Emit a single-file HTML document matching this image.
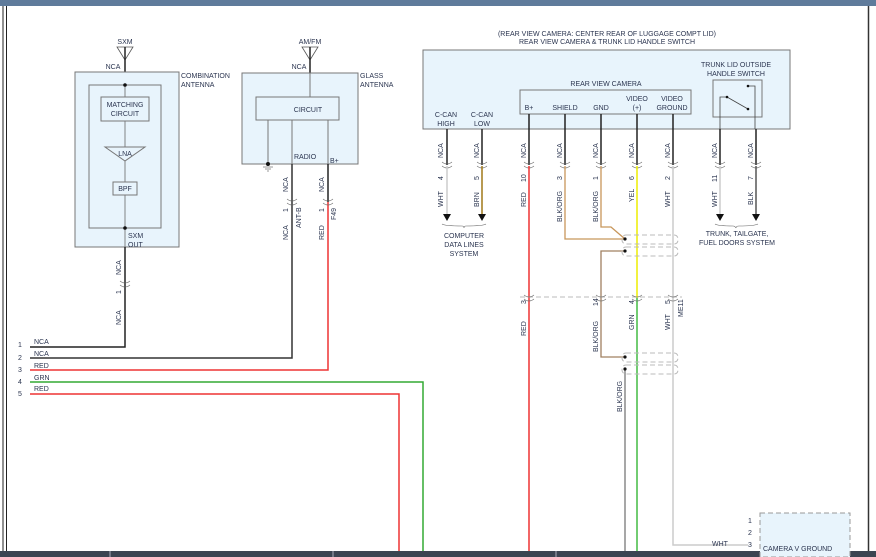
<!DOCTYPE html>
<html><head><meta charset="utf-8"><style>
html,body{margin:0;padding:0;background:#fff;}
svg{display:block;font-family:"Liberation Sans",Arial,sans-serif;}
text{fill:#2b3550;font-size:7px;}
</style></head><body>
<svg width="876" height="557" viewBox="0 0 876 557" xmlns="http://www.w3.org/2000/svg">
<rect x="0" y="0" width="876" height="6" fill="#5f7b9b"/>
<line x1="3" y1="6" x2="3" y2="551" stroke="#222" stroke-width="1"/>
<line x1="6.5" y1="6" x2="6.5" y2="551" stroke="#222" stroke-width="1"/>
<line x1="868.5" y1="6" x2="868.5" y2="551" stroke="#333" stroke-width="1.5"/>
<rect x="0" y="551" width="876" height="6" fill="#3b4552"/>
<line x1="110" y1="551" x2="110" y2="557" stroke="#aab" />
<line x1="333" y1="551" x2="333" y2="557" stroke="#aab" />
<line x1="556" y1="551" x2="556" y2="557" stroke="#aab" />

<!-- Combination antenna -->
<text x="125" y="44" text-anchor="middle">SXM</text>
<path d="M117 47 L133 47 L125 60 Z" fill="none" stroke="#555" stroke-width="0.8"/>
<line x1="125" y1="47" x2="125" y2="72" stroke="#222" stroke-width="1.5"/>
<text x="113" y="69" text-anchor="middle">NCA</text>
<rect x="75" y="72" width="104" height="175" fill="#e8f4fc" stroke="#777"/>
<text x="181" y="78">COMBINATION</text><text x="181" y="87">ANTENNA</text>
<rect x="89" y="85" width="72" height="143" fill="none" stroke="#777"/>
<line x1="125" y1="85" x2="125" y2="247" stroke="#666" stroke-width="0.8"/>
<rect x="101" y="97" width="48" height="24" fill="#e8f4fc" stroke="#777"/>
<text x="125" y="107" text-anchor="middle">MATCHING</text><text x="125" y="116" text-anchor="middle">CIRCUIT</text>
<path d="M105 147 L145 147 L125 161 Z" fill="#e8f4fc" stroke="#777"/>
<text x="125" y="156" text-anchor="middle">LNA</text>
<rect x="113" y="182" width="24" height="13" fill="#e8f4fc" stroke="#777"/>
<text x="125" y="191" text-anchor="middle">BPF</text>
<circle cx="125" cy="85" r="1.8" fill="#111"/><circle cx="125" cy="228" r="1.8" fill="#111"/>
<text x="128" y="238">SXM</text><text x="128" y="247">OUT</text>
<path d="M125 247 V347 H30" fill="none" stroke="#222" stroke-width="1.5"/>
<text transform="translate(121,275) rotate(-90)">NCA</text>
<text transform="translate(121,294) rotate(-90)">1</text>
<text transform="translate(121,325) rotate(-90)">NCA</text>
<path d="M120 281 q5 4 10 0 M120 285 q5 4 10 0" fill="none" stroke="#666" stroke-width="0.6"/>

<!-- Glass antenna -->
<text x="310" y="44" text-anchor="middle">AM/FM</text>
<path d="M302 47 L318 47 L310 60 Z" fill="none" stroke="#555" stroke-width="0.8"/>
<line x1="310" y1="47" x2="310" y2="73" stroke="#222" stroke-width="1.5"/>
<text x="299" y="69" text-anchor="middle">NCA</text>
<rect x="242" y="73" width="116" height="91" fill="#e8f4fc" stroke="#777"/>
<text x="360" y="78">GLASS</text><text x="360" y="87">ANTENNA</text>
<line x1="310" y1="73" x2="310" y2="97" stroke="#777"/>
<rect x="256" y="97" width="83" height="23" fill="#e8f4fc" stroke="#777"/>
<text x="308" y="112" text-anchor="middle">CIRCUIT</text>
<line x1="268" y1="120" x2="268" y2="164" stroke="#777"/>
<line x1="292" y1="120" x2="292" y2="164" stroke="#777"/>
<line x1="328" y1="120" x2="328" y2="164" stroke="#777"/>
<circle cx="268" cy="164" r="2" fill="#111"/>
<path d="M263 167 H273 M265 169 H271 M267 171 H269" stroke="#333" stroke-width="0.6"/>
<text x="294" y="159">RADIO</text><text x="330" y="163">B+</text>
<path d="M292 164 V358 H30" fill="none" stroke="#333" stroke-width="1.5"/>
<line x1="328" y1="164" x2="328" y2="202" stroke="#222" stroke-width="1.5"/>
<path d="M328 202 V370 H30" fill="none" stroke="#e33" stroke-width="1.5"/>
<text transform="translate(288,192) rotate(-90)">NCA</text>
<text transform="translate(324,192) rotate(-90)">NCA</text>
<text transform="translate(288,212) rotate(-90)">1</text>
<text transform="translate(324,212) rotate(-90)">1</text>
<text transform="translate(288,240) rotate(-90)">NCA</text>
<text transform="translate(324,240) rotate(-90)">RED</text>
<text transform="translate(301,228) rotate(-90)">ANT-B</text>
<text transform="translate(336,220) rotate(-90)">F49</text>
<path d="M287 199 q5 4 10 0 M287 203 q5 4 10 0 M323 199 q5 4 10 0 M323 203 q5 4 10 0" fill="none" stroke="#666" stroke-width="0.6"/>

<!-- left harness -->
<path d="M30 382 H423 V551" fill="none" stroke="#3a3" stroke-width="1.5"/>
<path d="M30 394 H399 V551" fill="none" stroke="#e33" stroke-width="1.5"/>
<g font-size="7"><text x="18" y="347">1</text><text x="18" y="360">2</text><text x="18" y="372">3</text><text x="18" y="384">4</text><text x="18" y="396">5</text>
<text x="34" y="344">NCA</text><text x="34" y="356">NCA</text><text x="34" y="368">RED</text><text x="34" y="380">GRN</text><text x="34" y="391">RED</text></g>

<!-- Rear view camera -->
<text x="607" y="36" text-anchor="middle">(REAR VIEW CAMERA: CENTER REAR OF LUGGAGE COMPT LID)</text>
<text x="607" y="44" text-anchor="middle">REAR VIEW CAMERA &amp; TRUNK LID HANDLE SWITCH</text>
<rect x="423" y="50" width="367" height="79" fill="#e8f4fc" stroke="#777"/>
<text x="606" y="86" text-anchor="middle">REAR VIEW CAMERA</text>
<rect x="520" y="90" width="171" height="24" fill="#e8f4fc" stroke="#777"/>
<text x="529" y="110" text-anchor="middle">B+</text><text x="565" y="110" text-anchor="middle">SHIELD</text><text x="601" y="110" text-anchor="middle">GND</text>
<text x="637" y="101" text-anchor="middle">VIDEO</text><text x="637" y="110" text-anchor="middle">(+)</text>
<text x="672" y="101" text-anchor="middle">VIDEO</text><text x="672" y="110" text-anchor="middle">GROUND</text>
<text x="446" y="117" text-anchor="middle">C-CAN</text><text x="446" y="126" text-anchor="middle">HIGH</text>
<text x="482" y="117" text-anchor="middle">C-CAN</text><text x="482" y="126" text-anchor="middle">LOW</text>
<text x="736" y="67" text-anchor="middle">TRUNK LID OUTSIDE</text><text x="736" y="76" text-anchor="middle">HANDLE SWITCH</text>
<rect x="713" y="80" width="49" height="37" fill="#e8f4fc" stroke="#777"/>
<path d="M720 129 V97 H727 M727 97 L748 109 M748 86 H755 V129" fill="none" stroke="#444" stroke-width="0.8"/>
<circle cx="727" cy="97" r="1.3" fill="#111"/><circle cx="748" cy="109" r="1.3" fill="#111"/><circle cx="748" cy="86" r="1.3" fill="#111"/>

<!-- black stubs -->
<g stroke="#222" stroke-width="1.5">
<line x1="447" y1="129" x2="447" y2="165"/><line x1="482" y1="129" x2="482" y2="165"/>
<line x1="529" y1="114" x2="529" y2="165"/><line x1="565" y1="114" x2="565" y2="165"/>
<line x1="601" y1="114" x2="601" y2="165"/><line x1="637" y1="114" x2="637" y2="165"/>
<line x1="673" y1="114" x2="673" y2="165"/><line x1="720" y1="129" x2="720" y2="165"/>
<line x1="756" y1="129" x2="756" y2="165"/>
</g>
<g fill="none" stroke="#666" stroke-width="0.6">
<path d="M442 162 q5 4 10 0 M442 166 q5 4 10 0 M477 162 q5 4 10 0 M477 166 q5 4 10 0 M524 162 q5 4 10 0 M524 166 q5 4 10 0 M560 162 q5 4 10 0 M560 166 q5 4 10 0 M596 162 q5 4 10 0 M596 166 q5 4 10 0 M632 162 q5 4 10 0 M632 166 q5 4 10 0 M668 162 q5 4 10 0 M668 166 q5 4 10 0 M715 162 q5 4 10 0 M715 166 q5 4 10 0 M751 162 q5 4 10 0 M751 166 q5 4 10 0"/>
</g>
<g font-size="7">
<text transform="translate(443,158) rotate(-90)">NCA</text><text transform="translate(479,158) rotate(-90)">NCA</text>
<text transform="translate(526,158) rotate(-90)">NCA</text><text transform="translate(562,158) rotate(-90)">NCA</text>
<text transform="translate(598,158) rotate(-90)">NCA</text><text transform="translate(634,158) rotate(-90)">NCA</text>
<text transform="translate(670,158) rotate(-90)">NCA</text><text transform="translate(717,158) rotate(-90)">NCA</text>
<text transform="translate(753,158) rotate(-90)">NCA</text>
<text transform="translate(443,180) rotate(-90)">4</text><text transform="translate(479,180) rotate(-90)">5</text>
<text transform="translate(526,182) rotate(-90)">10</text><text transform="translate(562,180) rotate(-90)">3</text>
<text transform="translate(598,180) rotate(-90)">1</text><text transform="translate(634,180) rotate(-90)">6</text>
<text transform="translate(670,180) rotate(-90)">2</text><text transform="translate(717,182) rotate(-90)">11</text>
<text transform="translate(753,180) rotate(-90)">7</text>
<text transform="translate(443,207) rotate(-90)">WHT</text><text transform="translate(479,207) rotate(-90)">BRN</text>
<text transform="translate(526,207) rotate(-90)">RED</text><text transform="translate(562,222) rotate(-90)">BLK/ORG</text>
<text transform="translate(598,222) rotate(-90)">BLK/ORG</text><text transform="translate(634,202) rotate(-90)">YEL</text>
<text transform="translate(670,207) rotate(-90)">WHT</text><text transform="translate(717,207) rotate(-90)">WHT</text>
<text transform="translate(753,205) rotate(-90)">BLK</text>
</g>
<line x1="447" y1="166" x2="447" y2="214" stroke="#ccc" stroke-width="1.5"/>
<line x1="482" y1="166" x2="482" y2="214" stroke="#a07818" stroke-width="1.5"/>
<line x1="720" y1="166" x2="720" y2="214" stroke="#ccc" stroke-width="1.5"/>
<line x1="756" y1="166" x2="756" y2="214" stroke="#555" stroke-width="1.5"/>
<path d="M443 214 h8 l-4 7z M478 214 h8 l-4 7z M716 214 h8 l-4 7z M752 214 h8 l-4 7z" fill="#111"/>
<path d="M442 224 q3 2 20 2 q2 0 2 2 q0 -2 2 -2 q17 0 20 -2 M715 224 q3 2 18 2 q2 0 3 2 q0 -2 3 -2 q15 0 19 -2" fill="none" stroke="#666" stroke-width="0.6"/>
<text x="464" y="238" text-anchor="middle">COMPUTER</text><text x="464" y="247" text-anchor="middle">DATA LINES</text><text x="464" y="256" text-anchor="middle">SYSTEM</text>
<text x="737" y="236" text-anchor="middle">TRUNK, TAILGATE,</text><text x="737" y="245" text-anchor="middle">FUEL DOORS SYSTEM</text>

<!-- camera wires -->
<line x1="529" y1="166" x2="529" y2="551" stroke="#e33" stroke-width="1.5"/>
<path d="M565 166 V239 H625" fill="none" stroke="#c8965a" stroke-width="1.3"/>
<path d="M601 166 V227 H611 L625 239" fill="none" stroke="#c8965a" stroke-width="1.3"/>
<path d="M625 251 H601 V357 H625" fill="none" stroke="#a08060" stroke-width="1.3"/>
<line x1="637" y1="166" x2="637" y2="298" stroke="#ee0" stroke-width="1.5"/>
<line x1="637" y1="298" x2="637" y2="551" stroke="#4b4" stroke-width="1.5"/>
<path d="M673 166 V545 H748" fill="none" stroke="#ccc" stroke-width="1.5"/>
<line x1="625" y1="369" x2="625" y2="551" stroke="#8a8a8a" stroke-width="1.5"/>
<circle cx="625" cy="239" r="1.6" fill="#111"/><circle cx="625" cy="251" r="1.6" fill="#111"/>
<circle cx="625" cy="357" r="1.6" fill="#111"/><circle cx="625" cy="369" r="1.6" fill="#111"/>
<g fill="none" stroke="#bbb" stroke-width="1" stroke-dasharray="5,3">
<rect x="622" y="235" width="56" height="9" rx="4"/><rect x="622" y="247" width="56" height="9" rx="4"/>
<rect x="622" y="353" width="56" height="9" rx="4"/><rect x="622" y="365" width="56" height="9" rx="4"/>
<line x1="520" y1="297" x2="682" y2="297"/>
</g>
<g fill="none" stroke="#666" stroke-width="0.6">
<path d="M524 295 q5 4 10 0 M524 299 q5 4 10 0 M596 295 q5 4 10 0 M596 299 q5 4 10 0 M632 295 q5 4 10 0 M632 299 q5 4 10 0 M668 295 q5 4 10 0 M668 299 q5 4 10 0"/>
</g>
<g font-size="7">
<text transform="translate(526,304) rotate(-90)">3</text><text transform="translate(598,306) rotate(-90)">14</text>
<text transform="translate(634,304) rotate(-90)">4</text><text transform="translate(670,304) rotate(-90)">5</text>
<text transform="translate(683,317) rotate(-90)">ME11</text>
<text transform="translate(526,336) rotate(-90)">RED</text><text transform="translate(598,352) rotate(-90)">BLK/ORG</text>
<text transform="translate(634,330) rotate(-90)">GRN</text><text transform="translate(670,330) rotate(-90)">WHT</text>
<text transform="translate(622,412) rotate(-90)">BLK/ORG</text>
</g>

<!-- camera v ground -->
<rect x="760" y="513" width="90" height="44" fill="#e8f4fc" stroke="#999" stroke-dasharray="5,3"/>
<text x="748" y="523">1</text><text x="748" y="535">2</text><text x="748" y="547">3</text>
<text x="712" y="546">WHT</text>
<text x="763" y="551">CAMERA V GROUND</text>
</svg>
</body></html>
